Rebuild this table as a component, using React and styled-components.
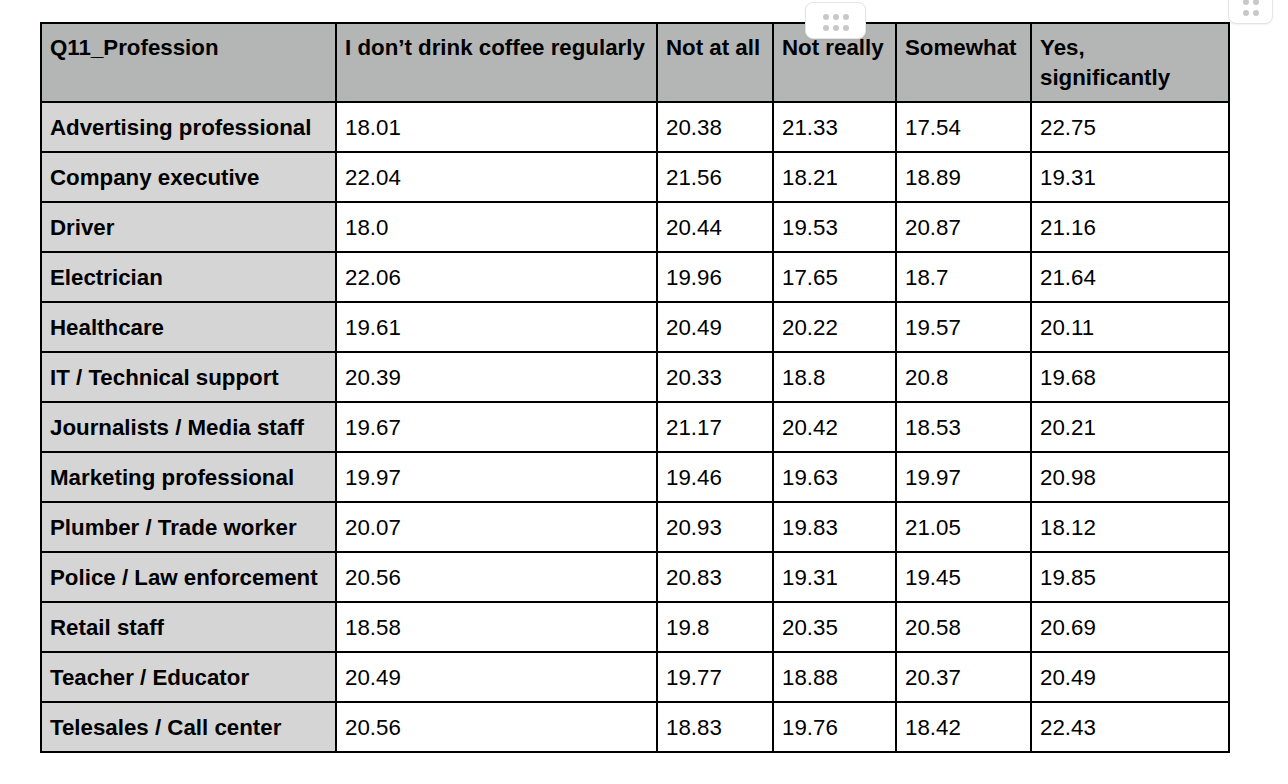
import styled, { createGlobalStyle } from "styled-components";

const GlobalStyle = createGlobalStyle`
  html, body {
    margin: 0;
    padding: 0;
    background: #fff;
  }
  body {
    font-family: "Liberation Sans", Arial, sans-serif;
    color: #000;
  }
`;

const Page = styled.div`
  position: relative;
  width: 1288px;
  height: 784px;
  overflow: hidden;
  padding: 22px 0 0 40px;
  box-sizing: border-box;
`;

const Table = styled.table`
  table-layout: fixed;
  width: 1190px;
  border-collapse: separate;
  border-spacing: 0;
  border-top: 2px solid #000;
  border-left: 2px solid #000;
  font-size: 22.3px;
  line-height: 30px;
`;

const Cell = styled.td`
  box-sizing: border-box;
  border-right: 2px solid #000;
  border-bottom: 2px solid #000;
  padding: ${(p) => (p.$head ? "9px 8px 8px 8px" : "10px 8px 8px 8px")};
  vertical-align: top;
  text-align: left;
  height: ${(p) => (p.$head ? "79px" : "50px")};
  background: ${(p) => (p.$head ? "#b4b6b5" : p.$label ? "#d5d5d5" : "#fff")};
  font-weight: ${(p) => (p.$head || p.$label ? 700 : 400)};
  white-space: nowrap;
`;

const Handle = styled.div`
  position: absolute;
  left: ${(p) => p.$left}px;
  top: ${(p) => p.$top}px;
  width: ${(p) => p.$w}px;
  height: ${(p) => p.$h}px;
  box-sizing: border-box;
  padding-top: 3px;
  background: #fff;
  border: 1px solid #e4e4e4;
  border-radius: 8px;
  box-shadow: 0 1px 2px rgba(0, 0, 0, 0.06);
  display: grid;
  grid-template-columns: repeat(${(p) => p.$cols}, 6px);
  grid-auto-rows: 6px;
  gap: 5px 4px;
  justify-content: center;
  align-content: center;
`;

const Dot = styled.span`
  width: 6px;
  height: 6px;
  border-radius: 50%;
  background: #c8c8c8;
`;

const widths = [295, 321, 116, 123, 135, 198];

const headers = [
  "Q11_Profession",
  "I don’t drink coffee regularly",
  "Not at all",
  "Not really",
  "Somewhat",
  <>
    Yes,
    <br />
    significantly
  </>,
];

const rows = [
  ["Advertising professional", "18.01", "20.38", "21.33", "17.54", "22.75"],
  ["Company executive", "22.04", "21.56", "18.21", "18.89", "19.31"],
  ["Driver", "18.0", "20.44", "19.53", "20.87", "21.16"],
  ["Electrician", "22.06", "19.96", "17.65", "18.7", "21.64"],
  ["Healthcare", "19.61", "20.49", "20.22", "19.57", "20.11"],
  ["IT / Technical support", "20.39", "20.33", "18.8", "20.8", "19.68"],
  ["Journalists / Media staff", "19.67", "21.17", "20.42", "18.53", "20.21"],
  ["Marketing professional", "19.97", "19.46", "19.63", "19.97", "20.98"],
  ["Plumber / Trade worker", "20.07", "20.93", "19.83", "21.05", "18.12"],
  ["Police / Law enforcement", "20.56", "20.83", "19.31", "19.45", "19.85"],
  ["Retail staff", "18.58", "19.8", "20.35", "20.58", "20.69"],
  ["Teacher / Educator", "20.49", "19.77", "18.88", "20.37", "20.49"],
  ["Telesales / Call center", "20.56", "18.83", "19.76", "18.42", "22.43"],
];

const App = () => {
  return (
    <Page>
      <GlobalStyle />
      <Table>
        <colgroup>
          {widths.map((w, i) => (
            <col key={i} style={{ width: w }} />
          ))}
        </colgroup>
        <thead>
          <tr>
            {headers.map((h, i) => (
              <Cell as="th" key={i} $head>
                {h}
              </Cell>
            ))}
          </tr>
        </thead>
        <tbody>
          {rows.map((r) => (
            <tr key={r[0]}>
              {r.map((v, i) => (
                <Cell key={i} $label={i === 0}>
                  {v}
                </Cell>
              ))}
            </tr>
          ))}
        </tbody>
      </Table>
      <Handle $left={805} $top={2} $w={61} $h={37} $cols={3}>
        {[...Array(6)].map((_, i) => (
          <Dot key={i} />
        ))}
      </Handle>
      <Handle $left={1228} $top={-12} $w={45} $h={36} $cols={2}>
        {[...Array(4)].map((_, i) => (
          <Dot key={i} />
        ))}
      </Handle>
    </Page>
  );
};

export default App;
